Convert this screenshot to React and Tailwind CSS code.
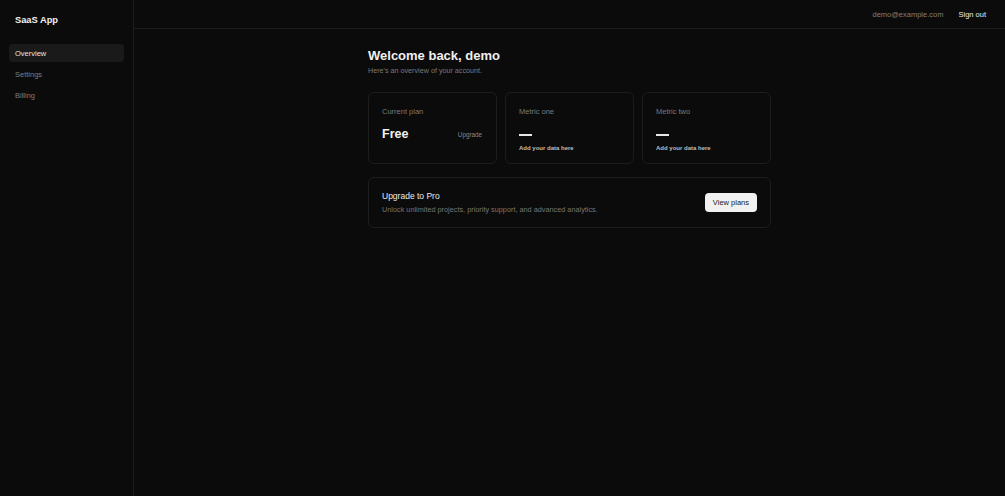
import React from "react";

const navItems = ["Overview", "Settings", "Billing"];

function Sidebar() {
  return (
    <aside className="w-[134px] shrink-0 border-r border-[#1c1c1c] bg-[#0b0b0b] flex flex-col">
      <div className="h-[40px] flex items-center px-[15px] pt-[1px]">
        <span className="text-[9.3px] font-bold text-[#f2f2f2]">SaaS App</span>
      </div>
      <nav className="flex flex-col gap-[3px] px-[9px] pt-[4px]">
        {navItems.map((item, i) => (
          <a
            key={item}
            className={`h-[18px] flex items-center px-[6px] pt-[1px] rounded-[4px] text-[7.5px] ${
              i === 0 ? "bg-[#1a1a1a] text-[#e6e6e6]" : "text-[#7d7d7d]"
            }`}
          >
            {item}
          </a>
        ))}
      </nav>
    </aside>
  );
}

function Card({ label, children }) {
  return (
    <div className="h-[72px] rounded-[6px] border border-[#1d1d1d] bg-[#0b0b0b] px-[13px] pt-[13px]">
      <div className="text-[7.5px] text-[#7a7a7a]">{label}</div>
      {children}
    </div>
  );
}

function Metric({ label }) {
  return (
    <Card label={label}>
      <div className="mt-[17px] h-[2px] w-[13px] bg-[#e8e8e8]" />
      <div className="mt-[8px] text-[6px] font-semibold text-[#bdbdbd]">Add your data here</div>
    </Card>
  );
}

export default function App() {
  return (
    <div
      className="flex h-[496px] w-full bg-[#0b0b0b] text-white"
      style={{ fontFamily: '"Liberation Sans", Arial, sans-serif' }}
    >
      <Sidebar />
      <div className="flex-1 flex flex-col">
        <header className="h-[29px] border-b border-[#1c1c1c] flex items-center justify-end gap-[15px] pr-[19px] pt-[2px]">
          <span className="text-[7.5px] text-[#7f7f7f]">demo@example.com</span>
          <span className="text-[7.5px] font-medium text-[#ececec]">Sign out</span>
        </header>
        <main className="flex-1 flex justify-center">
          <div className="w-[403px] pt-[18px]">
            <h1 className="text-[13px] font-bold text-[#f0f0f0] leading-[18px]">Welcome back, demo</h1>
            <p className="mt-[1px] text-[7.2px] text-[#7a7a7a]">Here's an overview of your account.</p>

            <div className="mt-[15px] grid grid-cols-3 gap-[8px]">
              <Card label="Current plan">
                <div className="mt-[8px] flex items-center justify-between">
                  <span className="text-[12.5px] font-bold text-[#f2f2f2]">Free</span>
                  <span className="text-[6.3px] text-[#8a8a8a] pr-[1px]">Upgrade</span>
                </div>
              </Card>
              <Metric label="Metric one" />
              <Metric label="Metric two" />
            </div>

            <div className="mt-[13px] h-[51px] rounded-[6px] border border-[#1d1d1d] flex items-center justify-between px-[13px]">
              <div className="flex flex-col gap-[2px] pt-[2px]">
                <span className="text-[8.5px] text-[#ececec]">Upgrade to Pro</span>
                <span className="text-[7.3px] text-[#767676]">
                  Unlock unlimited projects, priority support, and advanced analytics.
                </span>
              </div>
              <button className="h-[19px] px-[8px] mt-[1px] rounded-[4px] bg-[#f1f1f1] text-[7.5px] text-[#1a1a1a]">
                View plans
              </button>
            </div>
          </div>
        </main>
      </div>
    </div>
  );
}
